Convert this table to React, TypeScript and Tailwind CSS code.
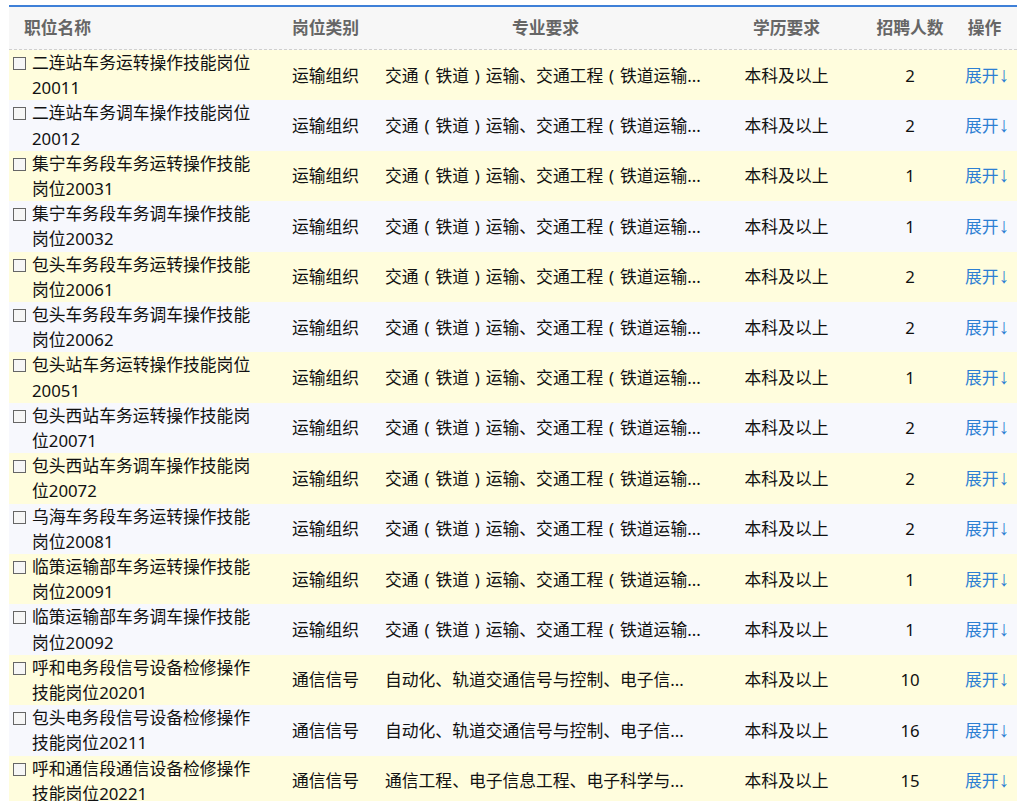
import React from "react";

type Row = { name: string; cat: string; major: string; n: number };

const M1 = "交通（铁道）运输、交通工程（铁道运输...";
const M2 = "自动化、轨道交通信号与控制、电子信...";
const M3 = "通信工程、电子信息工程、电子科学与...";

const rows: Row[] = [
  { name: "二连站车务运转操作技能岗位20011", cat: "运输组织", major: M1, n: 2 },
  { name: "二连站车务调车操作技能岗位20012", cat: "运输组织", major: M1, n: 2 },
  { name: "集宁车务段车务运转操作技能岗位20031", cat: "运输组织", major: M1, n: 1 },
  { name: "集宁车务段车务调车操作技能岗位20032", cat: "运输组织", major: M1, n: 1 },
  { name: "包头车务段车务运转操作技能岗位20061", cat: "运输组织", major: M1, n: 2 },
  { name: "包头车务段车务调车操作技能岗位20062", cat: "运输组织", major: M1, n: 2 },
  { name: "包头站车务运转操作技能岗位20051", cat: "运输组织", major: M1, n: 1 },
  { name: "包头西站车务运转操作技能岗位20071", cat: "运输组织", major: M1, n: 2 },
  { name: "包头西站车务调车操作技能岗位20072", cat: "运输组织", major: M1, n: 2 },
  { name: "乌海车务段车务运转操作技能岗位20081", cat: "运输组织", major: M1, n: 2 },
  { name: "临策运输部车务运转操作技能岗位20091", cat: "运输组织", major: M1, n: 1 },
  { name: "临策运输部车务调车操作技能岗位20092", cat: "运输组织", major: M1, n: 1 },
  { name: "呼和电务段信号设备检修操作技能岗位20201", cat: "通信信号", major: M2, n: 10 },
  { name: "包头电务段信号设备检修操作技能岗位20211", cat: "通信信号", major: M2, n: 16 },
  { name: "呼和通信段通信设备检修操作技能岗位20221", cat: "通信信号", major: M3, n: 15 },
];

const grid = "grid grid-cols-[271px_93px_345px_137px_110px_52px]";

function Major({ text }: { text: string }) {
  const parts = text.split(/([（）])/);
  return (
    <>
      {parts.map((p, i) =>
        p === "（" || p === "）" ? (
          <span key={i} className="inline-block w-[16.8px] text-center">
            {p === "（" ? "(" : ")"}
          </span>
        ) : (
          <React.Fragment key={i}>{p}</React.Fragment>
        )
      )}
    </>
  );
}

export default function App() {
  return (
    <div
      className="w-[1032px] h-[801px] overflow-hidden bg-white pt-[5px] pl-[9px]"
      style={{ fontFamily: '"Noto Sans", "Noto Sans CJK SC", sans-serif' }}
    >
      <div className="w-[1008px] border-t-2 border-[#3f80d8]">
        <div
          className={`${grid} h-[43px] items-center bg-[#f7f7f7] border-b border-dashed border-[#cfcfcf] text-[16.8px] font-bold text-[#666]`}
        >
          <div className="pl-[15px]">职位名称</div>
          <div className="pl-[12px]">岗位类别</div>
          <div className="text-center">专业要求</div>
          <div className="text-center">学历要求</div>
          <div className="text-center">招聘人数</div>
          <div className="text-center pr-[13px]">操作</div>
        </div>
        {rows.map((r, i) => (
          <div
            key={i}
            className={`${grid} items-center text-[16.8px] leading-[25.2px] text-[#111] ${
              i % 2 === 0 ? "bg-[#fffddd]" : "bg-[#f7f8fd]"
            }`}
          >
            <div className="flex items-start pl-[4px]">
              <span className="mt-[7px] w-[13px] h-[13px] shrink-0 border border-[#666] bg-[#f6f6f6]" />
              <span className="ml-[6px] w-[226px] break-all">{r.name}</span>
            </div>
            <div className="pl-[12px]">{r.cat}</div>
            <div className="pl-[12px] whitespace-nowrap overflow-hidden">
              <Major text={r.major} />
            </div>
            <div className="text-center">本科及以上</div>
            <div className="text-center">{r.n}</div>
            <div className="text-center pr-[16px] text-[#2d7fd3] whitespace-nowrap">
              展开
              <span
                className="text-[21px] leading-[0]"
                style={{ fontFamily: '"Liberation Sans", sans-serif' }}
              >
                ↓
              </span>
            </div>
          </div>
        ))}
      </div>
    </div>
  );
}
